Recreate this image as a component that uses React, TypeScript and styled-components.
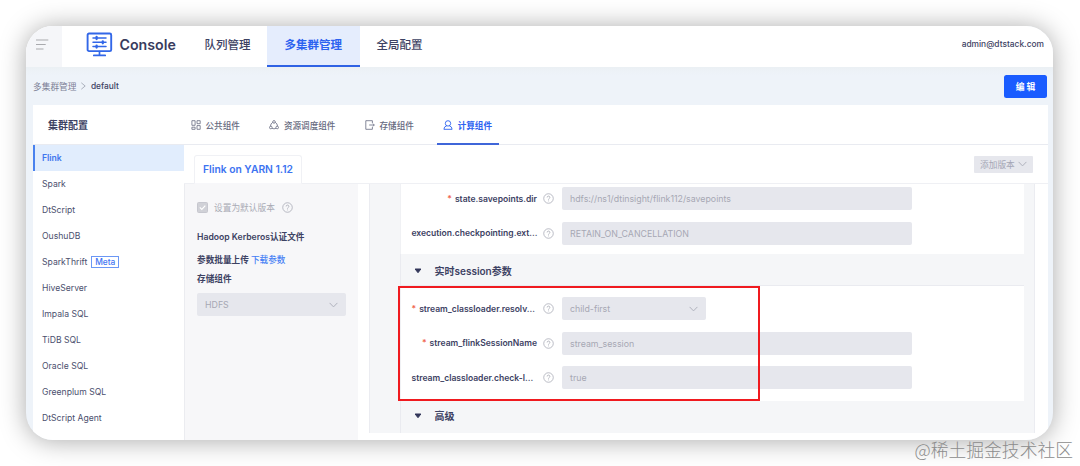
import React from 'react';
import styled, { createGlobalStyle } from 'styled-components';

const Global = createGlobalStyle`
  * { box-sizing: border-box; }
  html, body { margin: 0; background: #fff; overflow: hidden; }
  body { font-family: Inter, "Noto Sans CJK SC", sans-serif; color: #3d4263; font-size: 9px; }
`;

const Page = styled.div`
  position: relative;
  width: 1080px;
  height: 466px;
  padding: 26px;
  background: #fff;
  overflow: hidden;
  white-space: nowrap;
`;

const Window = styled.div`
  width: 1027px;
  height: 413.5px;
  border-radius: 27px;
  overflow: hidden;
  background: #eef3f9;
  box-shadow: 0 1px 26px rgba(0, 0, 0, 0.34);
  display: flex;
  flex-direction: column;
`;

const Header = styled.header`
  height: 41px;
  flex: none;
  display: flex;
  align-items: stretch;
  background: #fff;
`;

const MenuCell = styled.div`
  width: 36px;
  padding: 13px 0 0 10px;
  background: #f5f6f9;
`;

const Brand = styled.div`
  width: 102px;
  margin-left: 24px;
  display: flex;
  align-items: center;
  gap: 6.5px;
  padding-bottom: 5px;
  font-size: 14.2px;
  font-weight: 600;
  color: #383c5e;
`;

const NavItem = styled.div<{ $active?: boolean; $w: number }>`
  width: ${p => p.$w}px;
  display: flex;
  justify-content: center;
  align-items: center;
  padding-bottom: ${p => (p.$active ? 3 : 5)}px;
  font-size: 11.5px;
  font-weight: ${p => (p.$active ? 700 : 500)};
  color: ${p => (p.$active ? '#2c62f0' : '#3d4263')};
  background: ${p => (p.$active ? '#e5edfd' : 'transparent')};
  border-bottom: ${p => (p.$active ? '2px solid #2f62e4' : 'none')};
`;

const User = styled.div`
  margin-left: auto;
  padding: 12px 9px 0 0;
  font-size: 8.4px;
  line-height: 12px;
  font-weight: 500;
`;

const CrumbBar = styled.div`
  height: 38px;
  flex: none;
  display: flex;
  align-items: center;
  padding: 0 6px 0 7px;
  background: linear-gradient(#ebf0f4, #eef3f9 8px);
`;

const Crumb = styled.span<{ $current?: boolean }>`
  font-size: ${p => (p.$current ? 8.4 : 8.7)}px;
  font-weight: ${p => (p.$current ? 500 : 400)};
  color: ${p => (p.$current ? '#3d4263' : '#7d8096')};
`;

const EditButton = styled.button`
  margin-left: auto;
  width: 43px;
  height: 23px;
  border: 0;
  border-radius: 2.5px;
  padding: 0;
  background: #1a5cff;
  color: #fff;
  font: 700 8.8px Inter, "Noto Sans CJK SC", sans-serif;
`;

const Body = styled.main`
  flex: 1;
  min-height: 0;
  margin: 0 5px 0 7px;
  background: #fff;
  display: flex;
  flex-direction: column;
`;

const TabBar = styled.div`
  height: 40px;
  flex: none;
  display: flex;
  border-bottom: 1px solid #e9ebf1;
`;

const PanelTitle = styled.h2`
  width: 158px;
  margin: 0;
  padding-left: 15px;
  font-size: 10px;
  line-height: 40px;
  font-weight: 700;
`;

const Tab = styled.div<{ $active?: boolean; $gap?: number }>`
  display: flex;
  align-items: center;
  gap: 4.5px;
  height: 40px;
  margin-right: ${p => p.$gap ?? 0}px;
  padding: 0 ${p => (p.$active ? 6.5 : 0)}px;
  font-size: 8.6px;
  font-weight: ${p => (p.$active ? 700 : 500)};
  color: ${p => (p.$active ? '#2c62f0' : '#666a80')};
  box-shadow: ${p => (p.$active ? 'inset 0 -2px #3f66d9' : 'none')};
`;

const Columns = styled.div`
  flex: 1;
  min-height: 0;
  display: flex;
`;

const Sidebar = styled.nav`
  width: 151px;
  flex: none;
`;

const SideItem = styled.div<{ $active?: boolean }>`
  height: 25.97px;
  display: flex;
  align-items: center;
  gap: 4px;
  padding-left: ${p => (p.$active ? 7 : 9)}px;
  border-left: ${p => (p.$active ? '2px solid #4a82ee' : 'none')};
  background: ${p => (p.$active ? '#e1edfd' : 'transparent')};
  font-size: 8.65px;
  font-weight: ${p => (p.$active ? 600 : 400)};
  color: ${p => (p.$active ? '#3f76ee' : '#4b4f6e')};
`;

const MetaTag = styled.span`
  width: 28px;
  height: 12px;
  display: flex;
  align-items: center;
  justify-content: center;
  border: 1px solid #6b97f5;
  color: #3f76f3;
  font-size: 8.4px;
  font-weight: 500;
`;

const Workspace = styled.section`
  flex: 1;
  min-width: 0;
  display: flex;
  flex-direction: column;
`;

const VersionBar = styled.div`
  height: 39px;
  flex: none;
  display: flex;
  justify-content: space-between;
  align-items: flex-end;
  padding: 0 15px 0 10px;
  border-bottom: 1px solid #eff0f4;
`;

const VersionTab = styled.div`
  width: 108px;
  height: 29px;
  margin-bottom: -1px;
  border: 1px solid #f0f1f5;
  border-bottom-color: #f7f7fa;
  border-radius: 3px 3px 0 0;
  background: #fff;
  text-align: center;
  line-height: 26px;
  font-size: 10.3px;
  font-weight: 600;
  color: #3c73f1;
`;

const AddVersion = styled.div`
  width: 59px;
  height: 17px;
  margin-bottom: 10.5px;
  display: flex;
  align-items: center;
  justify-content: space-between;
  padding: 0 6px;
  border-radius: 1px;
  background: #e6e7ed;
  color: #a4a6b5;
  font-size: 8.7px;
`;

const Panels = styled.div`
  flex: 1;
  min-height: 0;
  display: flex;
`;

const Settings = styled.aside`
  width: 174px;
  flex: none;
  padding: 13px 0 0 12px;
  background: #f7f7f9;
  border-left: 1px solid #ebecf0;
`;

const CheckRow = styled.div`
  height: 20px;
  display: flex;
  align-items: center;
  font-size: 8.7px;
  color: #a9abb5;
  & > span { margin: 0 7.5px 0 6px; }
`;

const Label = styled.div<{ $top: number }>`
  margin-top: ${p => p.$top}px;
  height: 14px;
  line-height: 14px;
  font-size: 8.65px;
  font-weight: 600;
  & > a { color: #4580f5; font-weight: 500; }
`;

const Field = styled.div<{ $w: number; $top?: number }>`
  width: ${p => p.$w}px;
  height: 23px;
  flex: none;
  margin-top: ${p => p.$top ?? 0}px;
  display: flex;
  align-items: center;
  justify-content: space-between;
  padding: 0 8px;
  border-radius: 2px;
  background: #e6e7ed;
  color: #a6a8b4;
  font-size: 8.8px;
`;

const Parameters = styled.div`
  width: 666px;
  height: 249px;
  margin-left: 11px;
  padding: 0 10px 0 30px;
  border: solid #ebecf1;
  border-width: 0 1px;
  background: #f5f6f8;
`;

const Group = styled.div<{ $h: number; $pad: number }>`
  height: ${p => p.$h}px;
  padding-top: ${p => p.$pad}px;
  display: flex;
  flex-direction: column;
  gap: 11.5px;
  background: #fff;
  border-left: 1px solid #f0f1f4;
`;

const GroupTitle = styled.div<{ $last?: boolean }>`
  height: 32px;
  display: flex;
  align-items: center;
  gap: 13px;
  padding: ${p => (p.$last ? '0 0 3px 12.5px' : '2px 0 0 12.5px')};
  font-size: 10px;
  font-weight: 600;
  border: solid #eaebf0;
  border-width: 0 0 ${p => (p.$last ? 0 : 1)}px 1px;
`;

const Row = styled.div`
  height: 23px;
  display: flex;
  align-items: center;
`;

const Name = styled.div<{ $cut?: boolean }>`
  width: 136px;
  display: flex;
  justify-content: ${p => (p.$cut ? 'flex-start' : 'flex-end')};
  padding-left: ${p => (p.$cut ? 10.5 : 0)}px;
  margin-right: 6px;
  font-size: 8.55px;
  font-weight: 600;
`;

const Star = styled.span`
  color: #f0644c;
  margin-right: 3px;
`;

const HelpSlot = styled.span`
  width: 19px;
  display: flex;
`;

const Highlight = styled.div`
  position: absolute;
  left: 398px;
  top: 285.5px;
  width: 362px;
  height: 115.5px;
  border: 2px solid #f01a1f;
`;

const Watermark = styled.div`
  position: absolute;
  right: 7px;
  top: 436px;
  font: 300 17.8px/26px "Noto Sans CJK SC", sans-serif;
  color: #8c8c8c;
`;

const Help = () => (
  <svg width="11" height="11" viewBox="0 0 12 12" fill="none" stroke="#a2a4b0" strokeWidth="0.8">
    <circle cx="6" cy="6" r="5.2" />
    <path d="M4.5 4.9a1.5 1.5 0 1 1 2.3 1.2Q6 6.6 6 7.3M6 8.2v.9" />
  </svg>
);

const Chevron = () => (
  <svg width="9" height="6" viewBox="0 0 9 6" fill="none" stroke="#b0b2bd" strokeWidth="1">
    <path d="M.6.9 4.5 4.9 8.4.9" />
  </svg>
);

const Caret = () => (
  <svg width="8" height="6" viewBox="0 0 8 6">
    <path d="M1.1 1h5.8L4 4.7z" fill="#33375a" stroke="#33375a" strokeWidth="1" strokeLinejoin="round" />
  </svg>
);

type Param = { name: string; value: string; req?: boolean; cut?: boolean; select?: boolean };

const checkpointParams: Param[] = [
  { name: 'state.savepoints.dir', value: 'hdfs://ns1/dtinsight/flink112/savepoints', req: true },
  { name: 'execution.checkpointing.ext...', value: 'RETAIN_ON_CANCELLATION', cut: true },
];

const sessionParams: Param[] = [
  { name: 'stream_classloader.resolv...', value: 'child-first', req: true, cut: true, select: true },
  { name: 'stream_flinkSessionName', value: 'stream_session', req: true },
  { name: 'stream_classloader.check-l...', value: 'true', cut: true },
];

const ParamRow = ({ p }: { p: Param }) => (
  <Row>
    <Name $cut={p.cut}>{p.req && <Star>*</Star>}{p.name}</Name>
    <HelpSlot><Help /></HelpSlot>
    <Field $w={p.select ? 144 : 350}>{p.value}{p.select && <Chevron />}</Field>
  </Row>
);

const engines = ['Flink', 'Spark', 'DtScript', 'OushuDB', 'SparkThrift', 'HiveServer', 'Impala SQL', 'TiDB SQL', 'Oracle SQL', 'Greenplum SQL', 'DtScript Agent'];

export default function App() {
  return (
    <Page>
      <Global />
      <Window>
        <Header>
          <MenuCell>
            <svg width="13" height="11" viewBox="0 0 13 11" stroke="#a9aaae" strokeWidth="1.1">
              <path d="M0 1h12.3M0 5.5h9.7M0 10h7.5" />
            </svg>
          </MenuCell>
          <Brand>
            <svg width="27" height="25" viewBox="0 0 27 25" fill="none" stroke="#3267e8" strokeWidth="1.5" strokeLinecap="round">
              <rect x="1.6" y="1.5" width="23.6" height="17.6" rx="1.4" strokeWidth="1.9" />
              <path d="M13.5 19.5v3.6M7.8 23.4h11.4" strokeWidth="1.7" />
              <path d="M7 6h13M7 10.3h13M7 14.6h13" />
              <path d="M10.6 5v2M16.8 9.3v2M10.6 13.6v2" strokeWidth="2.3" />
            </svg>
            Console
          </Brand>
          <NavItem $w={79}>队列管理</NavItem>
          <NavItem $w={92.5} $active>多集群管理</NavItem>
          <NavItem $w={80}>全局配置</NavItem>
          <User>admin@dtstack.com</User>
        </Header>
        <CrumbBar>
          <Crumb>多集群管理</Crumb>
          <svg width="14.5" height="8" viewBox="0 0 15 8" fill="none" stroke="#a2a6b3" strokeWidth="0.9"><path d="M5.5.7 9.5 4 5.5 7.3" /></svg>
          <Crumb $current>default</Crumb>
          <EditButton>编 辑</EditButton>
        </CrumbBar>
        <Body>
          <TabBar>
            <PanelTitle>集群配置</PanelTitle>
            <Tab $gap={29.5}>
              <svg width="10" height="10" viewBox="0 0 10 10" fill="none" stroke="currentColor" strokeWidth="0.8">
                <path d="M.9.7h3.2v4.6H.9zM6 .7h3.2v3H6zM.9 7.2h3.2v2.1H.9zM6 5.6h3.2v3.7H6z" />
              </svg>
              公共组件
            </Tab>
            <Tab $gap={29.5}>
              <svg width="10" height="10" viewBox="0 0 10 10" fill="none" stroke="currentColor" strokeWidth="0.8">
                <circle cx="5" cy="1.9" r="1.3" /><circle cx="1.8" cy="7.5" r="1.3" /><circle cx="8.2" cy="7.5" r="1.3" />
                <path d="M3.8 2.3Q1.5 3.6 1.5 6.2M6.2 2.3Q8.5 3.6 8.5 6.2M3 8.3q2 1.1 4 0" />
              </svg>
              资源调度组件
            </Tab>
            <Tab $gap={22.8}>
              <svg width="10" height="10" viewBox="0 0 10 10" fill="none" stroke="currentColor" strokeWidth="0.8">
                <path d="M7.4 3V.7H.8v8.6h6.6V7M4.2 5h5.1M7.8 3.5 9.3 5 7.8 6.5" />
              </svg>
              存储组件
            </Tab>
            <Tab $active>
              <svg width="10" height="10" viewBox="0 0 10 10" fill="none" stroke="currentColor" strokeWidth="0.9">
                <circle cx="5" cy="3.4" r="2.7" /><path d="M3.7 5.8Q.9 6.6.9 9.3h8.2Q9.1 6.6 6.3 5.8" />
              </svg>
              计算组件
            </Tab>
          </TabBar>
          <Columns>
            <Sidebar>
              {engines.map((name, i) => (
                <SideItem key={name} $active={i === 0}>
                  {name}
                  {name === 'SparkThrift' && <MetaTag>Meta</MetaTag>}
                </SideItem>
              ))}
            </Sidebar>
            <Workspace>
              <VersionBar>
                <VersionTab>Flink on YARN 1.12</VersionTab>
                <AddVersion>添加版本<Chevron /></AddVersion>
              </VersionBar>
              <Panels>
                <Settings>
                  <CheckRow>
                    <svg width="11" height="11" viewBox="0 0 11 11" fill="none">
                      <rect x=".5" y=".5" width="10" height="10" rx="1" fill="#d0d1d7" stroke="#c6c7cf" />
                      <path d="M2.8 5.3 4.8 7.3 8.3 3.6" stroke="#fff" strokeWidth="1.2" />
                    </svg>
                    <span>设置为默认版本</span>
                    <Help />
                  </CheckRow>
                  <Label $top={13}>Hadoop Kerberos认证文件</Label>
                  <Label $top={9}>参数批量上传 <a>下载参数</a></Label>
                  <Label $top={5}>存储组件</Label>
                  <Field $w={149} $top={7}>HDFS<Chevron /></Field>
                </Settings>
                <Parameters>
                  <Group $h={70} $pad={3}>
                    {checkpointParams.map(p => <ParamRow key={p.name} p={p} />)}
                  </Group>
                  <GroupTitle><Caret />实时session参数</GroupTitle>
                  <Group $h={115} $pad={11}>
                    {sessionParams.map(p => <ParamRow key={p.name} p={p} />)}
                  </Group>
                  <GroupTitle $last><Caret />高级</GroupTitle>
                </Parameters>
              </Panels>
            </Workspace>
          </Columns>
        </Body>
      </Window>
      <Highlight />
      <Watermark>@稀土掘金技术社区</Watermark>
    </Page>
  );
}
